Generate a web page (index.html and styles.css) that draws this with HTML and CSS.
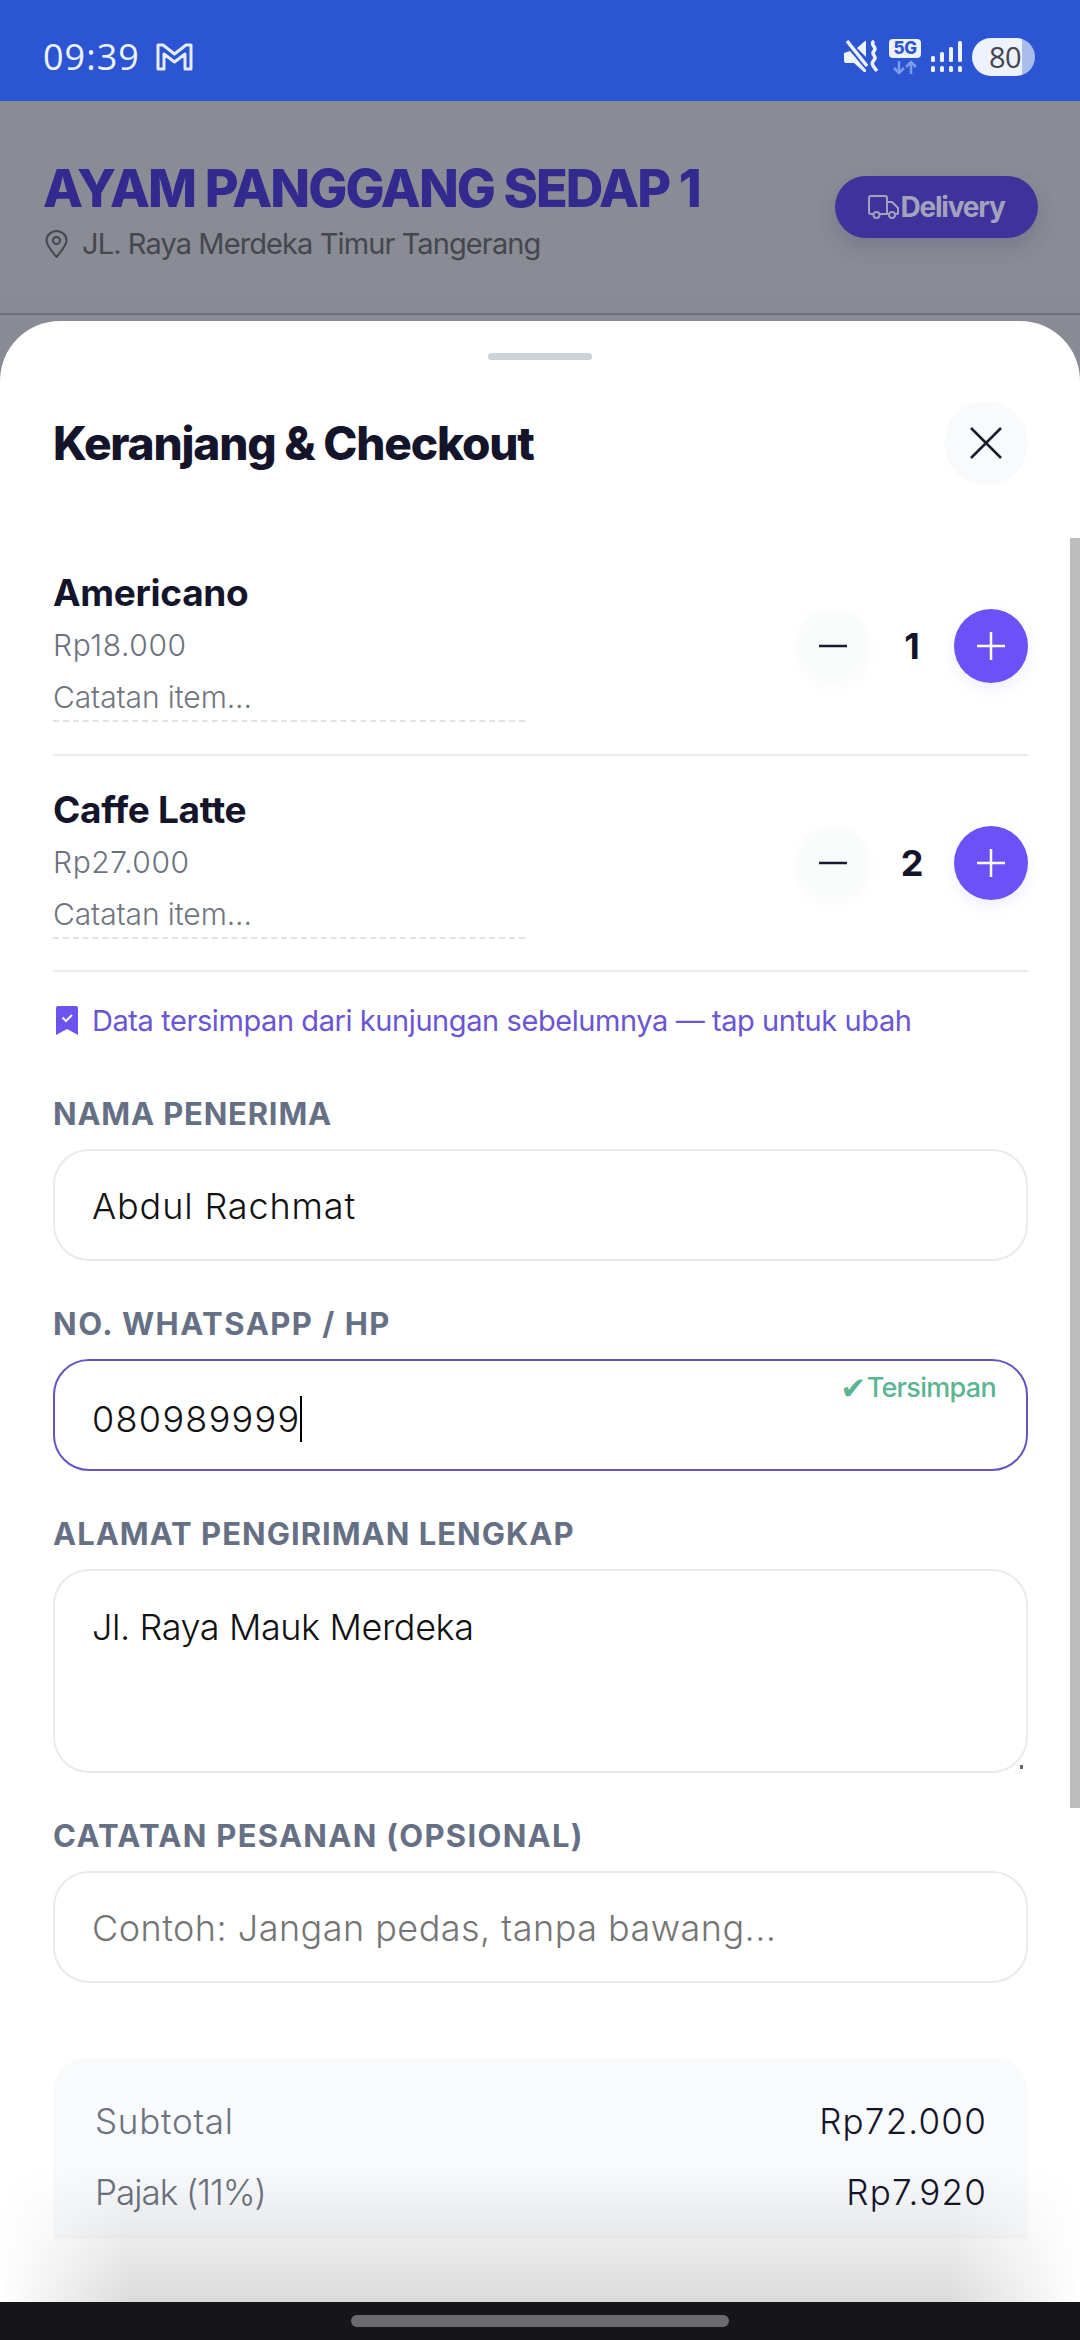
FILE: index.html
```html
<!DOCTYPE html>
<html lang="en">
<head>
    <meta charset="UTF-8">
    <meta name="viewport" content="width=device-width, initial-scale=1.0">
    <title>Keranjang &amp; Checkout</title>
    <link rel="stylesheet" href="styles.css">
</head>
<body>
    <div class="app">
        <div class="status-bar">
            <div class="status-left">
                <span class="clock">09:39</span>
                <svg class="gmail" width="37" height="29" viewBox="0 0 37 29" fill="none" stroke="#e6ecfb" stroke-width="3" stroke-linejoin="round"><path d="M2 3h5l11.500 9L30 3h5v24h-6V12l-10.500 8L8 12v15H2z"/></svg>
            </div>
            <div class="status-right">
                <svg width="36" height="33" viewBox="0 0 36 33"><path d="M1 13l6-2 16 19v2h-2L11 23H3q-2 0-2-2zM14 8l8-7q1-1 1 1v15z" fill="#eef2fd"/><path d="M4 1l20 25" stroke="#eef2fd" stroke-width="3.500"/><path d="M31 1c-5 4 4 6 0 10s4 5 0 9 0 7 3 11" fill="none" stroke="#eef2fd" stroke-width="3.500"/></svg>
                <div class="net">
                    <span class="net-badge">5G</span>
                    <svg width="24" height="15" viewBox="0 0 24 15" fill="none" stroke="#7d9ce8" stroke-width="2.500"><path d="M6 1v12M1 8l5 5 5-5M18 14V2M13 7l5-5 5 5"/></svg>
                </div>
                <svg width="31" height="32" viewBox="0 0 31 32" fill="#eef2fd"><rect x="0" y="15" width="4" height="6" rx="1.500"/><rect x="9" y="11" width="4" height="10" rx="1.500"/><rect x="18" y="6" width="4" height="15" rx="1.500"/><rect x="27" y="0" width="4" height="21" rx="1.500"/><rect x="0" y="25" width="4" height="6" rx="1.500"/><rect x="9" y="25" width="4" height="6" rx="1.500"/><rect x="18" y="25" width="4" height="6" rx="1.500"/><rect x="27" y="25" width="4" height="6" rx="1.500"/></svg>
                <div class="battery">80</div>
            </div>
        </div>

        <header class="store-header">
            <div class="store-info">
                <h1>AYAM PANGGANG SEDAP 1</h1>
                <div class="store-address">
                    <svg width="23" height="28" viewBox="0 0 23 28" fill="none" stroke="#45474f" stroke-width="2"><path d="M11.500 27C6 20 1.500 15.500 1.500 10.500a10 9.500 0 0 1 20 0C21.500 15.500 17 20 11.500 27z"/><circle cx="11.500" cy="10.500" r="3.500"/></svg>
                    <span>JL. Raya Merdeka Timur Tangerang</span>
                </div>
            </div>
            <div class="delivery-pill">
                <svg width="31" height="24" viewBox="0 0 31 24" fill="none" stroke="#a3a2bd" stroke-width="2"><path d="M5 19H3a2 2 0 0 1-2-2V3a2 2 0 0 1 2-2h14a2 2 0 0 1 2 2v16h-7"/><path d="M19 7h5l6 6v5a1 1 0 0 1-1 1h-2M19 19h2"/><circle cx="8.500" cy="20" r="3"/><circle cx="24" cy="20" r="3"/></svg>
                <span>Delivery</span>
            </div>
        </header>

        <section class="sheet">
            <div class="handle"></div>
            <div class="sheet-title">
                <h2>Keranjang &amp; Checkout</h2>
                <button class="close-btn">
                    <svg width="34" height="34" viewBox="0 0 34 34" stroke="#1a1a2e" stroke-width="2.500"><path d="M2 2l30 30M32 2L2 32"/></svg>
                </button>
            </div>

            <div class="sheet-body">
                <div class="cart-item">
                    <div class="item-info">
                        <div class="item-name">Americano</div>
                        <div class="item-price">Rp18.000</div>
                        <div class="item-note">Catatan item...</div>
                    </div>
                    <div class="stepper">
                        <button class="step-btn minus"><svg width="28" height="28" viewBox="0 0 28 28" stroke="#1a1a2e" stroke-width="2.500"><path d="M0 14h28"/></svg></button>
                        <span class="qty">1</span>
                        <button class="step-btn plus"><svg width="28" height="28" viewBox="0 0 28 28" stroke="#fff" stroke-width="2.500"><path d="M0 14h28M14 0v28"/></svg></button>
                    </div>
                </div>
                <div class="cart-item">
                    <div class="item-info">
                        <div class="item-name">Caffe Latte</div>
                        <div class="item-price">Rp27.000</div>
                        <div class="item-note">Catatan item...</div>
                    </div>
                    <div class="stepper">
                        <button class="step-btn minus"><svg width="28" height="28" viewBox="0 0 28 28" stroke="#1a1a2e" stroke-width="2.500"><path d="M0 14h28"/></svg></button>
                        <span class="qty">2</span>
                        <button class="step-btn plus"><svg width="28" height="28" viewBox="0 0 28 28" stroke="#fff" stroke-width="2.500"><path d="M0 14h28M14 0v28"/></svg></button>
                    </div>
                </div>

                <div class="saved-note">
                    <svg width="22" height="29" viewBox="0 0 22 29"><path d="M2 0h18a2 2 0 0 1 2 2v27l-11-6-11 6V2a2 2 0 0 1 2-2z" fill="#6c52ee"/><path d="M6.500 11.500l3.500 3.500 6-6" fill="none" stroke="#fff" stroke-width="2"/></svg>
                    <span>Data tersimpan dari kunjungan sebelumnya — tap untuk ubah</span>
                </div>

                <label class="field-label first">NAMA PENERIMA</label>
                <div class="field name-val">Abdul Rachmat</div>

                <label class="field-label wide">NO. WHATSAPP / HP</label>
                <div class="field focused">
                    <span class="caret">080989999</span>
                    <span class="saved-tag"><i class="tick">✔</i>Tersimpan</span>
                </div>

                <label class="field-label">ALAMAT PENGIRIMAN LENGKAP</label>
                <div class="field area">Jl. Raya Mauk Merdeka<i class="resize-dot"></i></div>

                <label class="field-label opsional">CATATAN PESANAN (OPSIONAL)</label>
                <div class="field placeholder">Contoh: Jangan pedas, tanpa bawang...</div>

                <div class="summary">
                    <div class="summary-row"><span class="sub">Subtotal</span><b>Rp72.000</b></div>
                    <div class="summary-row"><span class="tax">Pajak (11%)</span><b>Rp7.920</b></div>
                </div>
            </div>
            <div class="sheet-foot"></div>
            <div class="scroll-thumb"></div>
            <div class="fade"></div>
        </section>

        <div class="nav-bar"><div class="nav-pill"></div></div>
    </div>
</body>
</html>
```

FILE: styles.css
```css
* { box-sizing: border-box; }
body { margin: 0; background-color: #fff; font-family: Inter, "Noto Sans", sans-serif; }
h1, h2 { margin: 0; }
button { padding: 0; border: none; display: flex; align-items: center; justify-content: center; }
.app { width: 1080px; height: 2340px; display: flex; flex-direction: column; overflow: hidden; background: linear-gradient(#8b8e96, #767981); }

.status-bar { height: 101px; flex: none; background-color: #2c55d4; display: flex; justify-content: space-between; align-items: center; padding: 12px 45px 0 43px; }
.status-left { display: flex; align-items: center; gap: 16px; }
.clock { font-family: "Open Sans", sans-serif; font-size: 36px; color: #eef2fd; letter-spacing: 1px; line-height: 40px; }
.gmail { display: block; }
.status-right { display: flex; align-items: center; gap: 10px; }
.net { display: flex; flex-direction: column; align-items: center; gap: 2px; }
.net-badge { width: 32px; height: 19px; background-color: #eef2fd; border-radius: 4px; color: #2c55d4; font-size: 17px; font-weight: 800; line-height: 19px; text-align: center; letter-spacing: -0.5px; }
.battery { width: 63px; height: 38px; border-radius: 19px; background: linear-gradient(to right, #eef2fd 50px, #a9bdec 50px); color: #44464f; font-family: "Open Sans", sans-serif; font-size: 29px; line-height: 38px; padding-left: 17px; letter-spacing: -0.5px; }

.store-header { height: 214px; flex: none; border-bottom: 2px solid #6f7179; display: flex; justify-content: space-between; align-items: flex-start; padding: 0 42px 0 43px; }
.store-info { padding-top: 58px; }
.store-info h1 { font-size: 52px; line-height: 60px; font-weight: 800; color: #34298e; letter-spacing: -1.9px; white-space: nowrap; }
.store-address { display: flex; align-items: center; gap: 14px; margin-top: 7px; padding-left: 2px; color: #45474f; font-size: 29px; line-height: 36px; letter-spacing: -0.9px; }
.delivery-pill { margin-top: 75px; width: 203px; height: 62px; border-radius: 31px; background-color: #3f329b; box-shadow: 0 8px 20px rgba(50,40,120,0.2); display: flex; align-items: center; justify-content: center; gap: 1px; color: #a3a2bd; font-size: 28px; font-weight: 700; letter-spacing: -1.2px; }

.sheet { position: relative; flex: 1; margin-top: 6px; background-color: #fff; border-radius: 60px 60px 0 0; display: flex; flex-direction: column; overflow: hidden; }
.handle { width: 104px; height: 7px; flex: none; margin: 32px auto 0; border-radius: 4px; background-color: #cbd2da; }
.sheet-title { flex: none; display: flex; justify-content: space-between; align-items: center; height: 84px; margin-top: 41px; padding: 0 52px 0 53px; }
.sheet-title h2 { font-size: 46px; font-weight: 800; color: #14142b; letter-spacing: -1.2px; }
.close-btn { width: 84px; height: 84px; border-radius: 50%; background-color: #f8fafb; }

.sheet-body { flex: 1; min-height: 0; overflow: hidden; padding: 24px 52px 0 53px; }
.cart-item { height: 216px; padding-top: 32px; border-bottom: 2px solid #e8eaed; display: flex; justify-content: space-between; }
.cart-item:nth-child(1) { height: 247px; padding-top: 62px; }
.item-info { width: 472px; }
.item-name { font-size: 37px; line-height: 44px; font-weight: 700; color: #14142b; letter-spacing: -0.3px; }
.item-price { margin-top: 8px; font-size: 30px; line-height: 44px; font-weight: 350; color: #6b7280; letter-spacing: 0.6px; }
.item-note { margin-top: 8px; font-size: 30px; line-height: 44px; font-weight: 350; color: #70757f; letter-spacing: -0.1px; border-bottom: 2px dashed #dfe2e6; height: 47px; }
.stepper { display: flex; align-items: center; height: 75px; margin-top: 37px; }
.step-btn { width: 74px; height: 74px; border-radius: 50%; }
.minus { background-color: #fafcfc; box-shadow: 0 4px 14px rgba(0,0,0,0.025); }
.plus { background-color: #6c52f6; box-shadow: 0 6px 14px rgba(108,82,246,0.1); }
.qty { width: 84px; text-align: center; font-size: 36px; font-weight: 700; color: #14142b; }

.saved-note { display: flex; align-items: center; gap: 14px; height: 36px; margin-top: 30px; padding-left: 3px; color: #6a55d4; font-size: 29px; letter-spacing: -0.42px; }
.field-label { display: block; height: 36px; margin-top: 45px; margin-bottom: 17px; font-size: 31px; line-height: 36px; font-weight: 700; color: #667085; letter-spacing: 1px; white-space: nowrap; }
.field-label.first { margin-top: 58px; letter-spacing: 0.8px; }
.field-label.wide { letter-spacing: 1.5px; }
.field-label.opsional { letter-spacing: 1.3px; }
.field { position: relative; height: 112px; border: 2px solid #e8eaed; border-radius: 36px; padding-left: 37px; font-size: 36px; line-height: 110px; font-weight: 350; color: #111; letter-spacing: 0.47px; }
.field.name-val { letter-spacing: 0.85px; }
.field.focused { border-color: #6653c4; letter-spacing: 1.3px; }
.field.placeholder { color: #757575; }
.caret { display: inline-block; height: 46px; line-height: 46px; border-right: 2px solid #000; vertical-align: middle; }
.saved-tag { position: absolute; top: 11px; right: 30px; line-height: 32px; font-size: 27px; font-weight: 500; color: #5cb592; letter-spacing: -0.7px; display: flex; align-items: center; }
.tick { font-family: "DejaVu Sans", sans-serif; font-style: normal; font-size: 31px; margin-right: 1px; }
.field.area { height: 204px; line-height: 44px; padding-top: 34px; letter-spacing: -0.4px; }
.resize-dot { position: absolute; right: 3px; bottom: 2px; width: 3px; height: 4px; background-color: #666; }

.summary { margin-top: 74px; padding: 44px 41px 0 42px; height: 240px; background-color: #f8fafc; border-radius: 36px 36px 0 0; }
.summary-row { display: flex; justify-content: space-between; height: 71px; align-items: flex-start; font-size: 35px; line-height: 40px; font-weight: 350; color: #6b7280; }
.summary-row b { font-weight: 350; color: #14142b; letter-spacing: 1.2px; }
.summary-row .sub { letter-spacing: 0.75px; }
.summary-row .tax { letter-spacing: -1px; }

.sheet-foot { height: 63px; flex: none; }
.scroll-thumb { position: absolute; top: 217px; right: 0; width: 10px; height: 1270px; background-color: #bdbdbd; }
.fade { position: absolute; left: 0; right: 0; bottom: 0; height: 135px; background: linear-gradient(rgba(0,0,0,0), rgba(0,0,0,0.14)); -webkit-mask-image: linear-gradient(to right, transparent, #000 130px, #000 950px, transparent); mask-image: linear-gradient(to right, transparent, #000 130px, #000 950px, transparent); }

.nav-bar { height: 38px; flex: none; background-color: #161618; display: flex; justify-content: center; padding-top: 13px; }
.nav-pill { width: 378px; height: 12px; border-radius: 6px; background-color: #6c6c6e; }
```
